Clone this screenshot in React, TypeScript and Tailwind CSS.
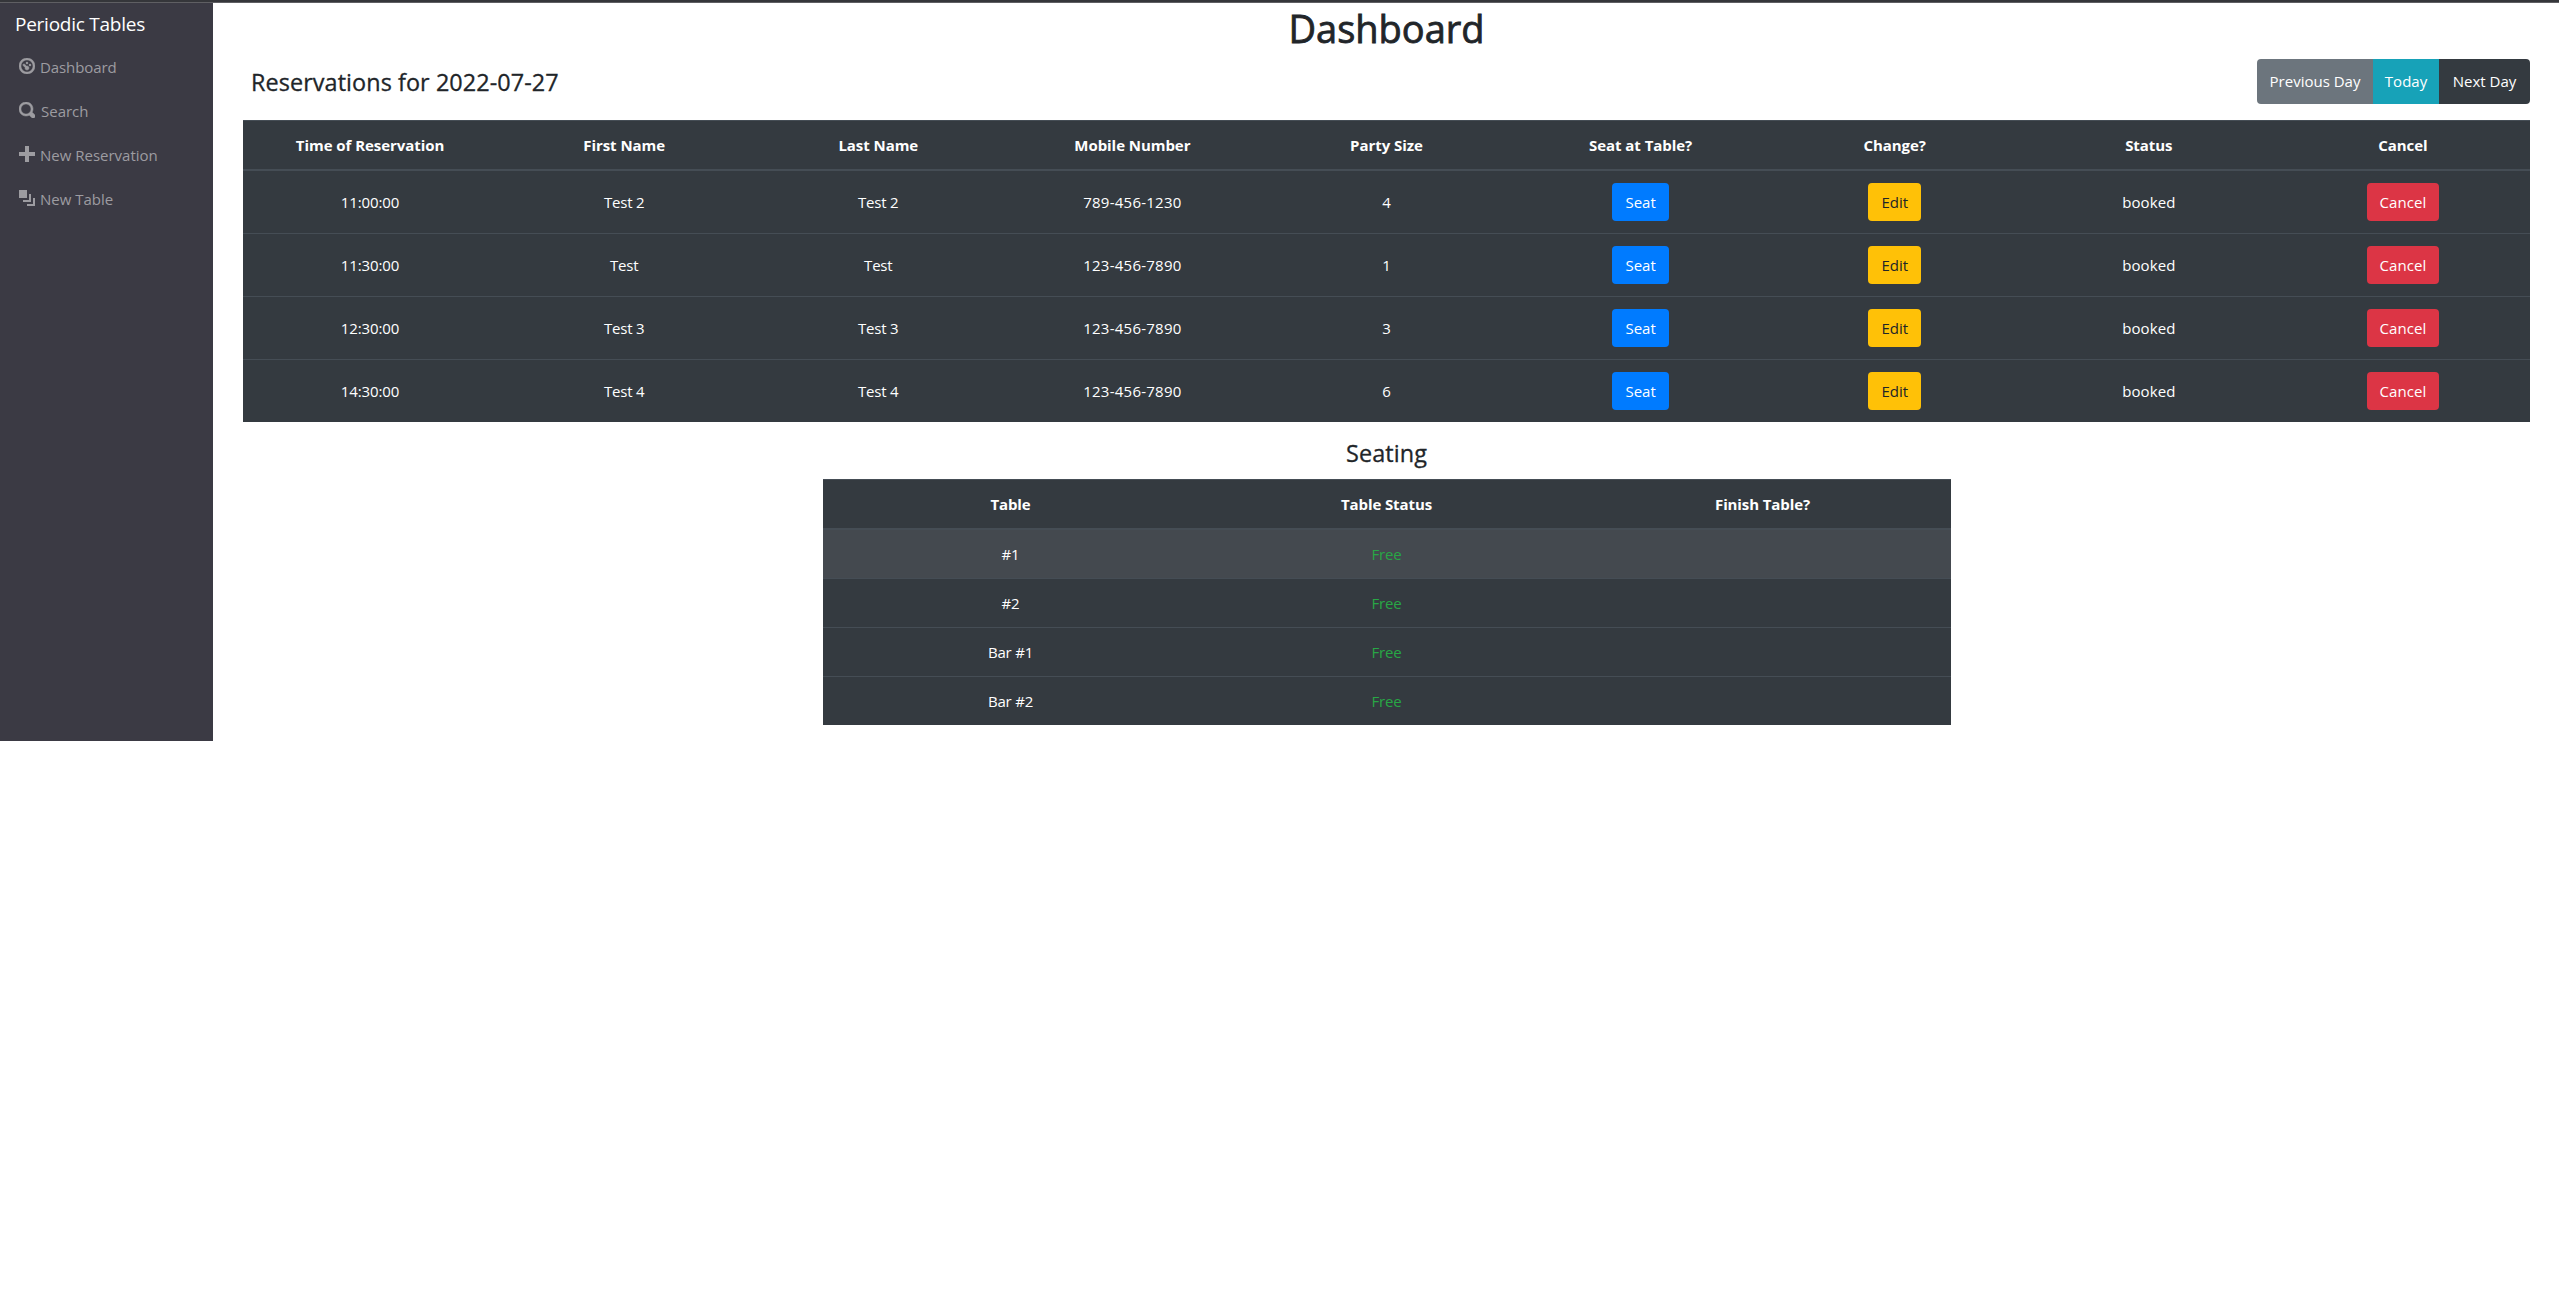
import React from "react";

const ICONS = {
  dashboard:
    "M4 0c-2.2 0-4 1.8-4 4s1.8 4 4 4 4-1.8 4-4-1.8-4-4-4zm0 1c1.66 0 3 1.34 3 3s-1.34 3-3 3-3-1.34-3-3 1.34-3 3-3zm0 1c-.28 0-.5.22-.5.5s.22.5.5.5.5-.22.5-.5-.22-.5-.5-.5zm-1.66 1a.5.5 0 0 0-.19.84l.91.91c-.02.08-.06.16-.06.25 0 .55.45 1 1 1s1-.45 1-1-.45-1-1-1c-.09 0-.17.04-.25.06l-.91-.91a.5.5 0 0 0-.44-.16.5.5 0 0 0-.06 0zm3.16 0c-.28 0-.5.22-.5.5s.22.5.5.5.5-.22.5-.5-.22-.5-.5-.5z",
  search:
    "M3.5 0c-1.93 0-3.5 1.57-3.5 3.5s1.57 3.5 3.5 3.5c.59 0 1.17-.14 1.66-.41a1 1 0 0 0 .13.13l1 1a1.02 1.02 0 1 0 1.44-1.44l-1-1a1 1 0 0 0-.16-.13c.27-.49.44-1.06.44-1.66 0-1.93-1.55-3.5-3.5-3.5zm0 1c1.39 0 2.5 1.11 2.5 2.5 0 .66-.24 1.27-.66 1.72-.01.01-.02.02-.03.03a1 1 0 0 0-.13.13c-.44.4-1.04.63-1.69.63-1.39 0-2.5-1.11-2.5-2.5s1.11-2.5 2.5-2.5z",
  plus: "M3 0v3h-3v2h3v3h2v-3h3v-2h-3v-3h-2z",
  layers: "M0 0v4h4v-4h-4zm5 2v3h-3v1h4v-4h-1zm2 2v3h-3v1h4v-4h-1z",
};

const NAV: { icon: keyof typeof ICONS; label: string; className: string; weight: number }[] = [
  { icon: "dashboard", label: "Dashboard", className: "ml-[5px] tracking-[-0.1px]", weight: 0.25 },
  { icon: "search", label: "Search", className: "ml-[6px]", weight: 0.25 },
  { icon: "plus", label: "New Reservation", className: "ml-[5px]", weight: 0 },
  { icon: "layers", label: "New Table", className: "ml-[5px]", weight: 0 },
];

const COLUMNS = [
  "Time of Reservation",
  "First Name",
  "Last Name",
  "Mobile Number",
  "Party Size",
  "Seat at Table?",
  "Change?",
  "Status",
  "Cancel",
];

const RESERVATIONS = [
  { time: "11:00:00", first: "Test 2", last: "Test 2", mobile: "789-456-1230", size: 4 },
  { time: "11:30:00", first: "Test", last: "Test", mobile: "123-456-7890", size: 1 },
  { time: "12:30:00", first: "Test 3", last: "Test 3", mobile: "123-456-7890", size: 3 },
  { time: "14:30:00", first: "Test 4", last: "Test 4", mobile: "123-456-7890", size: 6 },
];

const TABLES = ["#1", "#2", "Bar #1", "Bar #2"];

function Sidebar() {
  return (
    <nav className="flex h-[738px] w-[213px] shrink-0 flex-col bg-[#3b3a44]">
      <div className="flex h-[42px] items-center pl-[15px] text-[19px] tracking-[-0.25px] text-white">
        Periodic Tables
      </div>
      <ul className="flex flex-col">
        {NAV.map((item) => (
          <li key={item.label} className="flex h-11 items-center pl-[19px] text-[#9d9ca1]">
            <svg viewBox="0 0 8 8" className="-mt-[2px] size-4 shrink-0 fill-current">
              <path d={ICONS[item.icon]} stroke="currentColor" strokeWidth={item.weight} />
            </svg>
            <span className={item.className}>{item.label}</span>
          </li>
        ))}
      </ul>
    </nav>
  );
}

function Button({ className, children }: { className: string; children: React.ReactNode }) {
  return (
    <button className={`h-[38px] rounded pb-px text-center whitespace-nowrap ${className}`}>{children}</button>
  );
}

function ReservationsTable() {
  return (
    <div className="w-[2287px] bg-[#343a40] text-center text-white">
      <div className="grid h-[51px] grid-cols-9 items-center border-t border-b-2 border-[#454d55] font-bold tracking-[-0.05px]">
        {COLUMNS.map((name) => (
          <div key={name}>{name}</div>
        ))}
      </div>
      {RESERVATIONS.map((r, i) => (
        <div
          key={r.time}
          className={
            i === 0
              ? "grid h-[62px] grid-cols-9 items-center"
              : "grid h-[63px] grid-cols-9 items-center border-t border-[#454d55]"
          }
        >
          <div className="tracking-[-0.1px]">{r.time}</div>
          <div className="tracking-[-0.2px]">{r.first}</div>
          <div className="tracking-[-0.2px]">{r.last}</div>
          <div className="tracking-[0.25px]">{r.mobile}</div>
          <div>{r.size}</div>
          <div>
            <Button className="w-[57px] bg-[#007bff] text-white">Seat</Button>
          </div>
          <div>
            <Button className="w-[53px] bg-[#ffc107] text-[#212529]">Edit</Button>
          </div>
          <div className="tracking-[0.1px]">booked</div>
          <div>
            <Button className="w-[72px] bg-[#dc3545] tracking-[0.1px] text-white">Cancel</Button>
          </div>
        </div>
      ))}
    </div>
  );
}

function SeatingTable() {
  return (
    <div className="w-[1128px] bg-[#343a40] text-center text-white">
      <div className="grid h-[51px] grid-cols-3 items-center border-t border-b-2 border-[#454d55] font-bold tracking-[-0.1px]">
        <div>Table</div>
        <div>Table Status</div>
        <div>Finish Table?</div>
      </div>
      {TABLES.map((name, i) => (
        <div
          key={name}
          className={
            i === 0
              ? "grid h-12 grid-cols-3 items-center bg-[#44494f]"
              : "grid h-[49px] grid-cols-3 items-center border-t border-[#454d55]"
          }
        >
          <div className="tracking-[-0.2px]">{name}</div>
          <div className="tracking-[-0.2px] text-[#28a745]">Free</div>
          <div />
        </div>
      ))}
    </div>
  );
}

export default function App() {
  return (
    <div className="min-h-[1299px] bg-white font-['Open_Sans',sans-serif] text-[15px] leading-6 text-[#212529]">
      <div className="h-[3px] border-b border-[#5f5f63] bg-[#35363a]" />
      <div className="flex">
        <Sidebar />
        <main className="ml-[30px] w-[2287px]">
          <h1 className="h-14 text-center text-[38px] leading-[50px] font-medium [-webkit-text-stroke:0.8px]">
            Dashboard
          </h1>
          <div className="flex h-[61px] items-start justify-between">
            <h4 className="pt-[8px] pl-[8px] text-[23.4px] leading-[30px] font-medium tracking-[0.08px] [-webkit-text-stroke:0.3px]">
              Reservations for 2022-07-27
            </h4>
            <div className="flex h-[45px] overflow-hidden rounded text-white">
              <button className="w-[116px] bg-[#6c757d] pb-[2px]">Previous Day</button>
              <button className="w-[66px] bg-[#17a2b8] pb-[2px]">Today</button>
              <button className="w-[91px] bg-[#343a40] pb-[2px]">Next Day</button>
            </div>
          </div>
          <ReservationsTable />
          <h4 className="mt-4 h-[41px] text-center text-[23.4px] leading-[30px] font-medium tracking-[0.1px] [-webkit-text-stroke:0.3px]">
            Seating
          </h4>
          <div className="flex justify-center">
            <SeatingTable />
          </div>
        </main>
      </div>
    </div>
  );
}
